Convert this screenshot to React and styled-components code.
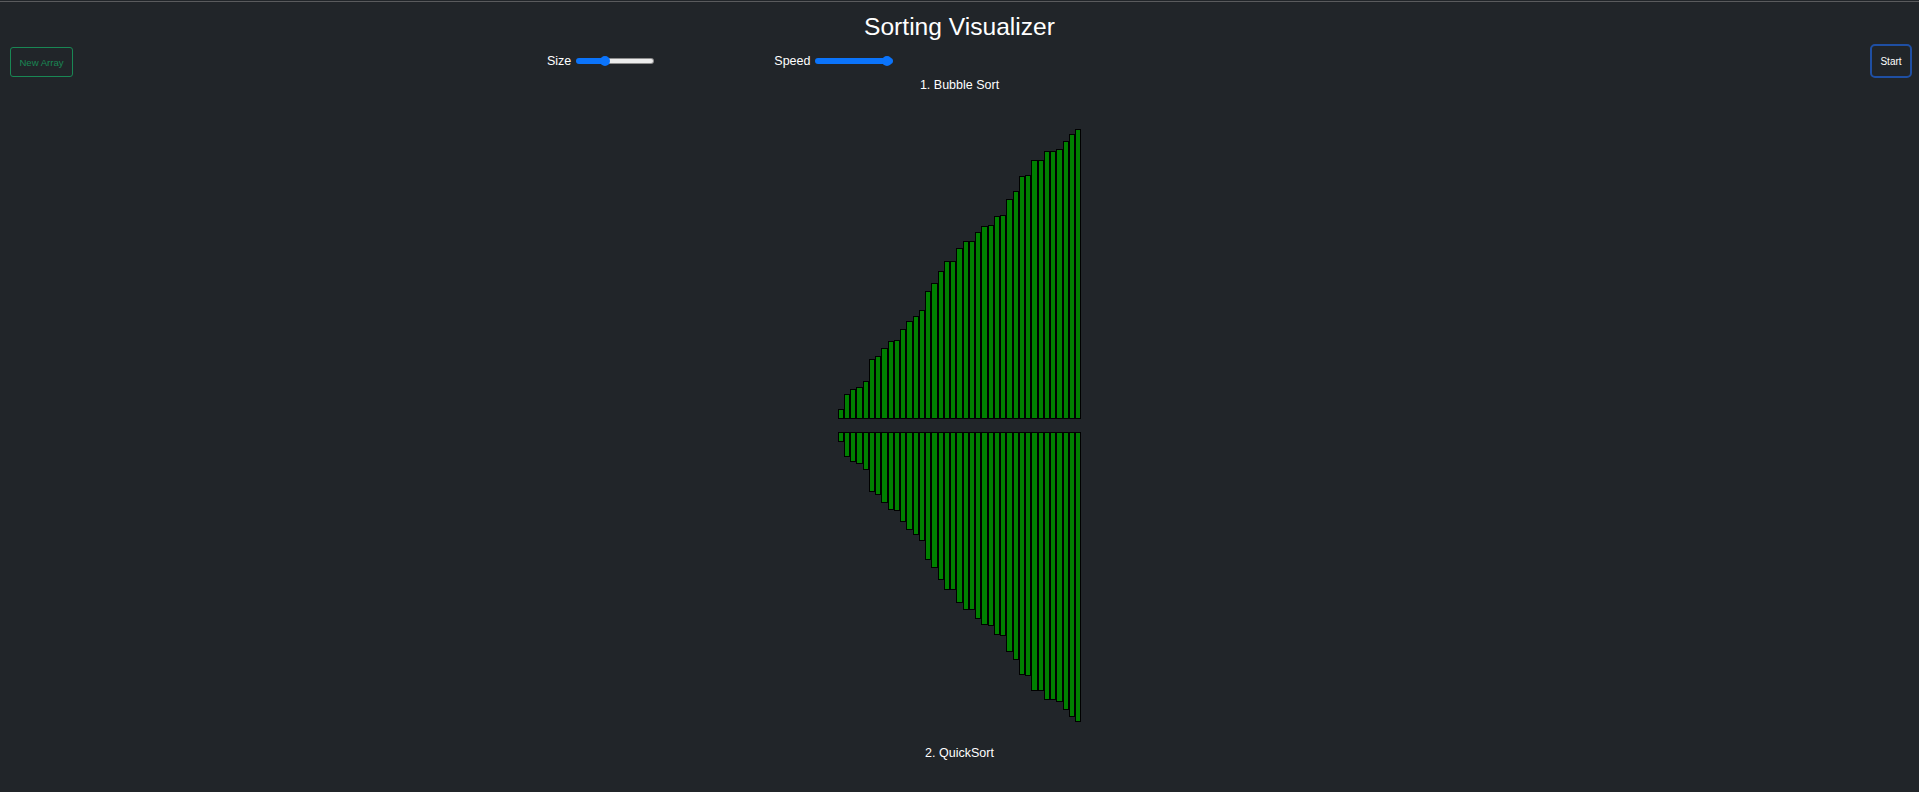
import React from 'react';
import styled, { createGlobalStyle } from 'styled-components';

const GlobalStyle = createGlobalStyle`
  html, body {
    margin: 0;
    padding: 0;
    background: #212529;
  }
  body {
    font-family: "Liberation Sans", Arial, sans-serif;
    color: #ffffff;
    overflow: hidden;
  }
`;

const Page = styled.div`
  height: 792px;
  box-sizing: border-box;
  padding-top: 1px;
  display: flex;
  flex-direction: column;
`;

const TopRule = styled.div`
  height: 1px;
  background: #5a5b5d;
`;

const Title = styled.h1`
  margin: 10px 0 0;
  font-size: 24.6px;
  font-weight: 400;
  line-height: 30px;
  text-align: center;
  color: #ffffff;
`;

const Toolbar = styled.div`
  margin-top: 2px;
  height: 34px;
  display: flex;
  align-items: center;
  padding: 0 7px 0 10px;
`;

const NewArrayButton = styled.button`
  margin-top: 2px;
  width: 63px;
  height: 30px;
  padding: 0;
  border: 1px solid #198754;
  border-radius: 3px;
  background: transparent;
  color: #198754;
  font-family: "Liberation Sans", Arial, sans-serif;
  font-size: 9.6px;
  cursor: pointer;
`;

const StartButton = styled.button`
  margin-left: auto;
  width: 42px;
  height: 34px;
  padding: 0;
  border: 2px solid #1f4fa3;
  border-radius: 5px;
  background: transparent;
  color: #ffffff;
  font-family: "Liberation Sans", Arial, sans-serif;
  font-size: 10px;
  cursor: pointer;
`;

const Controls = styled.div`
  margin-left: 474px;
  display: flex;
  align-items: center;
  gap: 120px;
`;

const SliderGroup = styled.label`
  display: flex;
  align-items: center;
  gap: 5px;
  font-size: 12.5px;
  color: #ffffff;
`;

const Range = styled.input`
  -webkit-appearance: none;
  appearance: none;
  width: 78px;
  height: 10px;
  margin: 0;
  padding: 0;
  background: transparent;

  &::-webkit-slider-runnable-track {
    height: 6px;
    box-sizing: border-box;
    border-radius: 3px;
    border: 1px solid transparent;
    background:
      linear-gradient(to right, #0b74fb ${(p) => p.$pct}%, transparent ${(p) => p.$pct}%) border-box,
      linear-gradient(#ececec, #ececec) padding-box,
      linear-gradient(#8e8e8e, #8e8e8e) border-box;
  }

  &::-webkit-slider-thumb {
    -webkit-appearance: none;
    appearance: none;
    width: 10px;
    height: 10px;
    margin-top: -3px;
    border-radius: 50%;
    border: none;
    background: #0b74fb;
  }
`;

const SortLabel = styled.div`
  margin-top: ${(p) => p.$gap}px;
  font-size: 12.5px;
  line-height: 14px;
  text-align: center;
  color: #ffffff;
`;

const Chart = styled.div`
  margin-top: ${(p) => p.$gap}px;
  height: 290px;
  display: flex;
  justify-content: center;
  align-items: ${(p) => (p.$hanging ? 'flex-start' : 'flex-end')};
`;

const Bar = styled.div`
  box-sizing: border-box;
  width: 6.25px;
  flex: none;
  border: 1px solid #000000;
  background: #008000;
`;

const values = [
  10, 25, 30, 32, 38, 60, 63, 71, 78, 79, 90, 98, 103, 109, 128, 136, 148,
  158, 158, 171, 178, 178, 187, 193, 194, 203, 204, 220, 228, 243, 244, 259,
  259, 268, 268, 270, 278, 285, 290,
];

function BarChart({ hanging, gap }) {
  return (
    <Chart $hanging={hanging} $gap={gap}>
      {values.map((v, i) => (
        <Bar key={i} style={{ height: `${v}px` }} />
      ))}
    </Chart>
  );
}

export default function App() {
  return (
    <>
      <GlobalStyle />
      <Page>
        <TopRule />
        <Title>Sorting Visualizer</Title>
        <Toolbar>
          <NewArrayButton>New Array</NewArrayButton>
          <Controls>
            <SliderGroup>
              Size
              <Range type="range" min="0" max="100" defaultValue="35" $pct={37} />
            </SliderGroup>
            <SliderGroup>
              Speed
              <Range type="range" min="0" max="100" defaultValue="100" $pct={100} />
            </SliderGroup>
          </Controls>
          <StartButton>Start</StartButton>
        </Toolbar>
        <SortLabel $gap={0}>1. Bubble Sort</SortLabel>
        <BarChart gap={37} />
        <BarChart hanging gap={13} />
        <SortLabel $gap={24}>2. QuickSort</SortLabel>
      </Page>
    </>
  );
}
